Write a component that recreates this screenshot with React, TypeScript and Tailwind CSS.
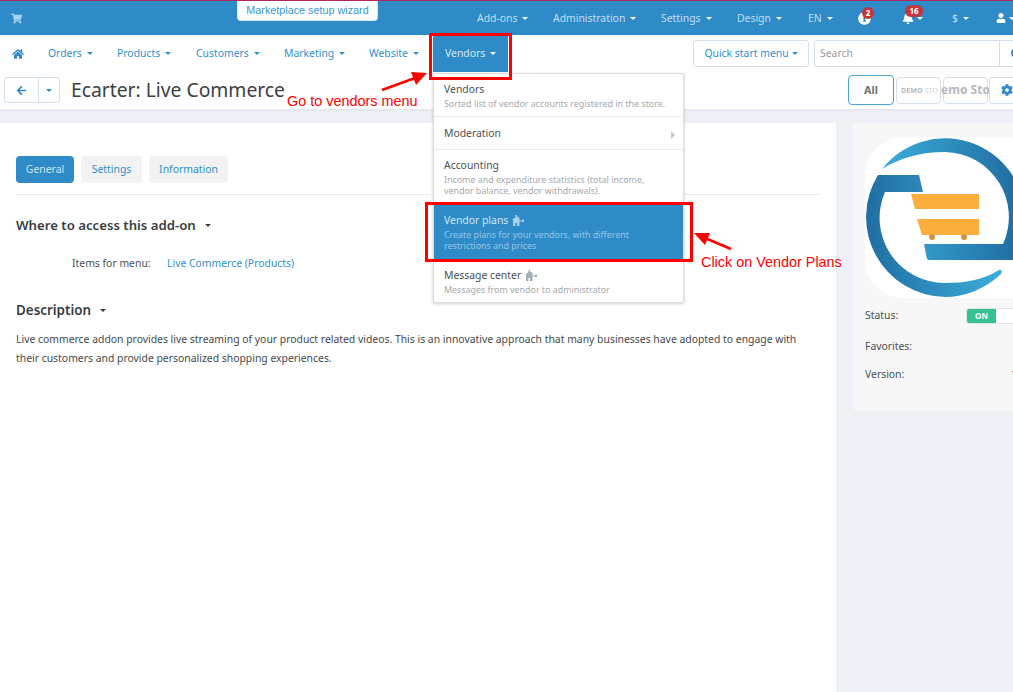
import { FaArrowLeft, FaBell, FaCog, FaHome, FaInfoCircle, FaSearch, FaShoppingCart, FaUser } from "react-icons/fa";

function Caret({ className = "" }: { className?: string }) {
  return <span className={`inline-block w-0 h-0 border-x-[3px] border-x-transparent border-t-[3px] border-t-current ${className}`} />;
}

function PlanIcon({ className = "" }: { className?: string }) {
  return (
    <svg className={className} width="13" height="11" viewBox="0 0 13 11" fill="currentColor">
      <path d="M3.500 0H5v1.200L7.500 3v2.500H10V4.500h2V7h-2V6.500H7.500V11H5V8H3.500v3H1V5H0L3.500 2z" />
    </svg>
  );
}

function TopItem({ label, className = "" }: { label: string; className?: string }) {
  return (
    <span className={`flex items-center gap-[5px] text-[10.4px] text-[#c3dff2] ${className}`}>
      {label}
      <Caret className="text-white" />
    </span>
  );
}

function NavItem({ label, className = "" }: { label: string; className?: string }) {
  return (
    <span className={`shrink-0 flex items-center gap-[5px] text-[10.4px] text-[#2f8fc9] ${className}`}>
      {label}
      <Caret />
    </span>
  );
}

function MenuItem({ title, desc, active, icon, arrow, className = "" }: { title: string; desc?: string[]; active?: boolean; icon?: boolean; arrow?: boolean; className?: string }) {
  return (
    <div className={`relative px-[10px] border-b ${active ? "bg-[#2e8bc8] border-[#2e8bc8]" : "border-[#e8ecef]"} ${className}`}>
      <div className={`flex items-center gap-[4px] text-[10.4px] leading-[14px] ${active ? "text-[#cfe6f5]" : "text-[#4a4f55]"}`}>
        {title}
        {icon && <PlanIcon className={active ? "text-[#a9cfe8]" : "text-[#a3b0ba]"} />}
      </div>
      {desc && (
        <div className={`mt-[2px] text-[8.9px] leading-[11px] ${active ? "text-[#95c6e6]" : "text-[#a5a9ad]"}`}>
          {desc.map((d) => (
            <div key={d}>{d}</div>
          ))}
        </div>
      )}
      {arrow && <span className="absolute right-[8px] top-[14px] w-0 h-0 border-y-[4px] border-y-transparent border-l-[4px] border-l-[#c4c8cc]" />}
    </div>
  );
}

function Logo() {
  return (
    <svg width="160" height="161" viewBox="0 0 160 161" className="shrink-0">
      <defs>
        <linearGradient id="ringTop" x1="0" x2="1" y1="0" y2="0">
          <stop offset="0" stopColor="#3badd9" />
          <stop offset="1" stopColor="#1f6a9f" />
        </linearGradient>
        <linearGradient id="ringBottom" x1="0" x2="1" y1="0" y2="0">
          <stop offset="0" stopColor="#206ea3" />
          <stop offset="1" stopColor="#3badd9" />
        </linearGradient>
      </defs>
      <rect width="200" height="161" rx="38" fill="#ffffff" />
      <path d="M17 32A80 80 0 0 1 160 80V123H64Q62 123 61.500 120L59 107H138A65 65 0 0 0 80 15C55 15 35 21 17 32Z" fill="url(#ringTop)" />
      <path d="M13 38H54L58 55H20A65 65 0 0 0 80 146C100 146 118 143 134 133Q138 132 136 137C120 152 100 160 80 160A80 80 0 0 1 13 38Z" fill="url(#ringBottom)" />
      <path d="M46 57H114V72H50z" fill="#fbae3c" />
      <path d="M52 82H114V98H57z" fill="#fbae3c" />
      <circle cx="67" cy="100" r="3" fill="#d8913a" />
      <circle cx="99" cy="100" r="3" fill="#d8913a" />
    </svg>
  );
}

export default function App() {
  return (
    <div className="relative w-[1013px] h-[692px] overflow-hidden flex flex-col bg-[#edf1f5] font-['Noto_Sans',sans-serif]">
      {/* Top bar */}
      <div className="relative h-[35px] shrink-0 bg-[#2e8bc8] border-t border-t-[#b0265f] flex items-center pl-[11px] pt-[1px]">
        <FaShoppingCart size={11} className="text-[#a5d2ee]" />
        <span className="absolute left-[237px] top-0 w-[141px] h-[20px] bg-white rounded-b-[4px] border border-[#d4e6f2] border-t-0 flex items-center justify-center text-[10.8px] text-[#3a97d2] font-['Liberation_Sans',sans-serif]">
          Marketplace setup wizard
        </span>
        <div className="ml-auto flex items-center">
          <TopItem label="Add-ons" className="w-[76px]" />
          <TopItem label="Administration" className="w-[108px]" />
          <TopItem label="Settings" className="w-[76px]" />
          <TopItem label="Design" className="w-[71px]" />
          <TopItem label="EN" className="w-[50px]" />
          <span className="relative w-[44px] flex">
            <FaInfoCircle size={13} className="text-white" />
            <span className="absolute left-[4px] -top-[5px] w-[12px] h-[12px] rounded-full bg-[#c4363c] text-white text-[8px] font-bold leading-[12px] text-center">2</span>
          </span>
          <span className="relative w-[50px] flex items-center gap-[3px]">
            <FaBell size={12} className="text-white" />
            <Caret className="text-white mt-[1px]" />
            <span className="absolute left-[3px] -top-[7px] w-[18px] h-[12px] rounded-full bg-[#c4363c] text-white text-[8px] font-bold leading-[12px] text-center">16</span>
          </span>
          <span className="w-[44px] flex items-center gap-[5px] text-[10.4px] text-[#c3dff2]">
            $
            <Caret className="text-white" />
          </span>
          <span className="w-[17px] flex items-center gap-[3px]">
            <FaUser size={10} className="text-white shrink-0" />
            <Caret className="text-white shrink-0" />
          </span>
        </div>
      </div>

      {/* Main nav */}
      <div className="h-[37px] shrink-0 bg-white flex items-center pl-[12px]">
        <span className="w-[36px] shrink-0 flex">
          <FaHome size={12} className="text-[#2e8bc8]" />
        </span>
        <NavItem label="Orders" className="w-[69px]" />
        <NavItem label="Products" className="w-[79px]" />
        <NavItem label="Customers" className="w-[88px]" />
        <NavItem label="Marketing" className="w-[85px]" />
        <NavItem label="Website" className="w-[64px]" />
        <span className="w-[75px] shrink-0 h-[37px] bg-[#2e8bc8] flex items-center pl-[12px] gap-[5px] text-[10.4px] text-[#d5e9f6]">
          Vendors
          <Caret className="text-white" />
        </span>
        <span className="ml-[185px] w-[116px] shrink-0 h-[27px] border border-[#d3e0e9] rounded-[3px] flex items-center justify-center gap-[3px] text-[10.4px] text-[#2f8fc9]">
          Quick start menu
          <Caret />
        </span>
        <div className="ml-[5px] h-[27px] w-[214px] shrink-0 border border-[#d3e0e9] rounded-[3px] flex items-center">
          <span className="w-[184px] shrink-0 pl-[5px] text-[10.4px] text-[#9a9a9a]">Search</span>
          <span className="flex-1 h-full border-l border-[#d3e0e9] flex items-center pl-[11px]">
            <FaSearch size={12} className="text-[#2e8bc8] shrink-0" />
          </span>
        </div>
      </div>

      {/* Title bar */}
      <div className="h-[38px] shrink-0 bg-white border-b border-[#e4e8ea] shadow-[0_1px_2px_rgba(0,0,0,0.04)] flex items-center pl-[4px] pb-[1px]">
        <div className="w-[56px] h-[26px] border border-[#d3e0e9] rounded-[3px] flex items-center">
          <span className="w-[34px] h-full flex items-center justify-center border-r border-[#d3e0e9]">
            <FaArrowLeft size={11} className="text-[#2e8bc8]" />
          </span>
          <span className="flex-1 flex justify-center text-[#2e8bc8]">
            <Caret />
          </span>
        </div>
        <h1 className="ml-[11px] text-[19.3px] leading-none text-[#3b4044]">Ecarter: Live Commerce</h1>
        <div className="ml-auto flex items-center gap-[2px]">
          <span className="w-[46px] h-[30px] border border-[#4aa1d8] rounded-[4px] flex items-center justify-center text-[10.8px] font-bold text-[#6f7275]">All</span>
          <span className="w-[45px] h-[27px] border border-[#d3e0e9] rounded-[4px] flex items-center overflow-hidden pl-[4px] whitespace-nowrap text-[7.2px] font-bold text-[#b8bcc0]">
            DEMO&nbsp;<span className="font-normal text-[#d0d3d6]">STO</span>
          </span>
          <span className="w-[45px] h-[27px] border border-[#d3e0e9] rounded-[4px] flex items-center justify-center whitespace-nowrap text-[12px] font-bold text-[#b5b8bb]">
            emo Sto
          </span>
          <span className="w-[30px] h-[27px] ml-[-1px] mr-[-6px] border border-[#d3e0e9] rounded-l-[4px] border-r-0 flex items-center pl-[11px]">
            <FaCog size={12} className="text-[#2e8bc8]" />
          </span>
        </div>
      </div>

      {/* Body */}
      <div className="flex-1 flex pt-[13px] gap-[17px] min-h-0">
        <main className="w-[836px] shrink-0 bg-white pl-[16px] pr-[17px] pt-[33px]">
          <div className="flex gap-[7px] pb-[11px] border-b border-[#e3e9ee] text-[10.4px]">
            <span className="w-[58px] h-[27px] rounded-[4px] bg-[#2e8bc8] text-[#cfe6f5] flex items-center justify-center">General</span>
            <span className="w-[61px] h-[27px] rounded-[4px] bg-[#f2f2f3] text-[#2f8fc9] flex items-center justify-center">Settings</span>
            <span className="w-[79px] h-[27px] rounded-[4px] bg-[#f2f2f3] text-[#2f8fc9] flex items-center justify-center">Information</span>
          </div>
          <h2 className="mt-[21px] flex items-center gap-[9px] text-[13.2px] leading-[18px] font-semibold text-[#3a3d40]">
            Where to access this add-on
            <Caret className="border-x-[3.5px] border-t-[3.5px]" />
          </h2>
          <div className="mt-[20px] flex text-[10.4px] leading-[18px]">
            <span className="ml-[56px] w-[95px] text-[#4a4f55]">Items for menu:</span>
            <span className="text-[#2f8fc9]">Live Commerce (Products)</span>
          </div>
          <h2 className="mt-[29px] flex items-center gap-[9px] text-[13.4px] leading-[18px] font-semibold text-[#3a3d40]">
            Description
            <Caret className="border-x-[3.5px] border-t-[3.5px]" />
          </h2>
          <p className="mt-[11px] text-[10.4px] leading-[19px] text-[#44484c]">
            Live commerce addon provides live streaming of your product related videos. This is an innovative approach that many businesses have adopted to engage with
            <br />
            their customers and provide personalized shopping experiences.
          </p>
        </main>

        <aside className="w-[200px] h-[287px] shrink-0 bg-[#f7f7f7] rounded-[3px] pl-[12px] pt-[14px]">
          <Logo />
          <div className="mt-[9px] flex items-center h-[18px] text-[10.4px] text-[#4a4f55]">
            <span className="w-[101px]">Status:</span>
            <span className="w-[60px] h-[16px] rounded-[3px] bg-white border border-[#e2e2e2] flex overflow-hidden">
              <span className="w-[29px] bg-[#35c192] text-white text-[8px] font-bold flex items-center justify-center">ON</span>
            </span>
          </div>
          <div className="mt-[13px] h-[18px] flex items-center text-[10.4px] text-[#4a4f55]">Favorites:</div>
          <div className="mt-[10px] h-[18px] flex items-center text-[10.4px] text-[#4a4f55]">
            <span className="w-[146px]">Version:</span>
            <span>1</span>
          </div>
        </aside>
      </div>

      {/* Vendors dropdown */}
      <div className="absolute left-[433px] top-[73px] w-[251px] bg-white border border-[#dcdfe2] shadow-[0_1px_3px_rgba(0,0,0,0.2)] flex flex-col">
        <MenuItem title="Vendors" desc={["Sorted list of vendor accounts registered in the store."]} className="h-[43px] pt-[8px]" />
        <MenuItem title="Moderation" arrow className="h-[33px] pt-[9px]" />
        <MenuItem title="Accounting" desc={["Income and expenditure statistics (total income,", "vendor balance, vendor withdrawals)."]} className="h-[54px] pt-[8px]" />
        <MenuItem title="Vendor plans" icon active desc={["Create plans for your vendors, with different", "restrictions and prices"]} className="h-[55px] pt-[9px]" />
        <MenuItem title="Message center" icon desc={["Messages from vendor to administrator"]} className="h-[43px] pt-[9px] border-b-0" />
      </div>

      {/* Tutorial annotations */}
      <div className="absolute left-[429px] top-[33px] w-[83px] h-[47px] border-[3px] border-[#fe0000]" />
      <div className="absolute left-[425px] top-[202px] w-[268px] h-[60px] border-[3px] border-[#fe0000]" />
      <span className="absolute left-[287px] top-[92px] text-[14.4px] leading-[18px] text-[#fe0000] font-['Liberation_Sans',sans-serif]">Go to vendors menu</span>
      <span className="absolute left-[701px] top-[253px] text-[14.4px] leading-[18px] text-[#fe0000] font-['Liberation_Sans',sans-serif]">Click on Vendor Plans</span>
      <svg className="absolute left-[375px] top-[65px]" width="60" height="35" viewBox="0 0 60 35">
        <path d="M7 25L40 13" stroke="#fe0000" strokeWidth="2.5" />
        <path d="M52 8L36 7L41 20z" fill="#fe0000" />
      </svg>
      <svg className="absolute left-[690px] top-[228px]" width="45" height="25" viewBox="0 0 45 25">
        <path d="M41 21L15 10" stroke="#fe0000" strokeWidth="2.5" />
        <path d="M4 5L20 5L15 17z" fill="#fe0000" />
      </svg>
    </div>
  );
}
